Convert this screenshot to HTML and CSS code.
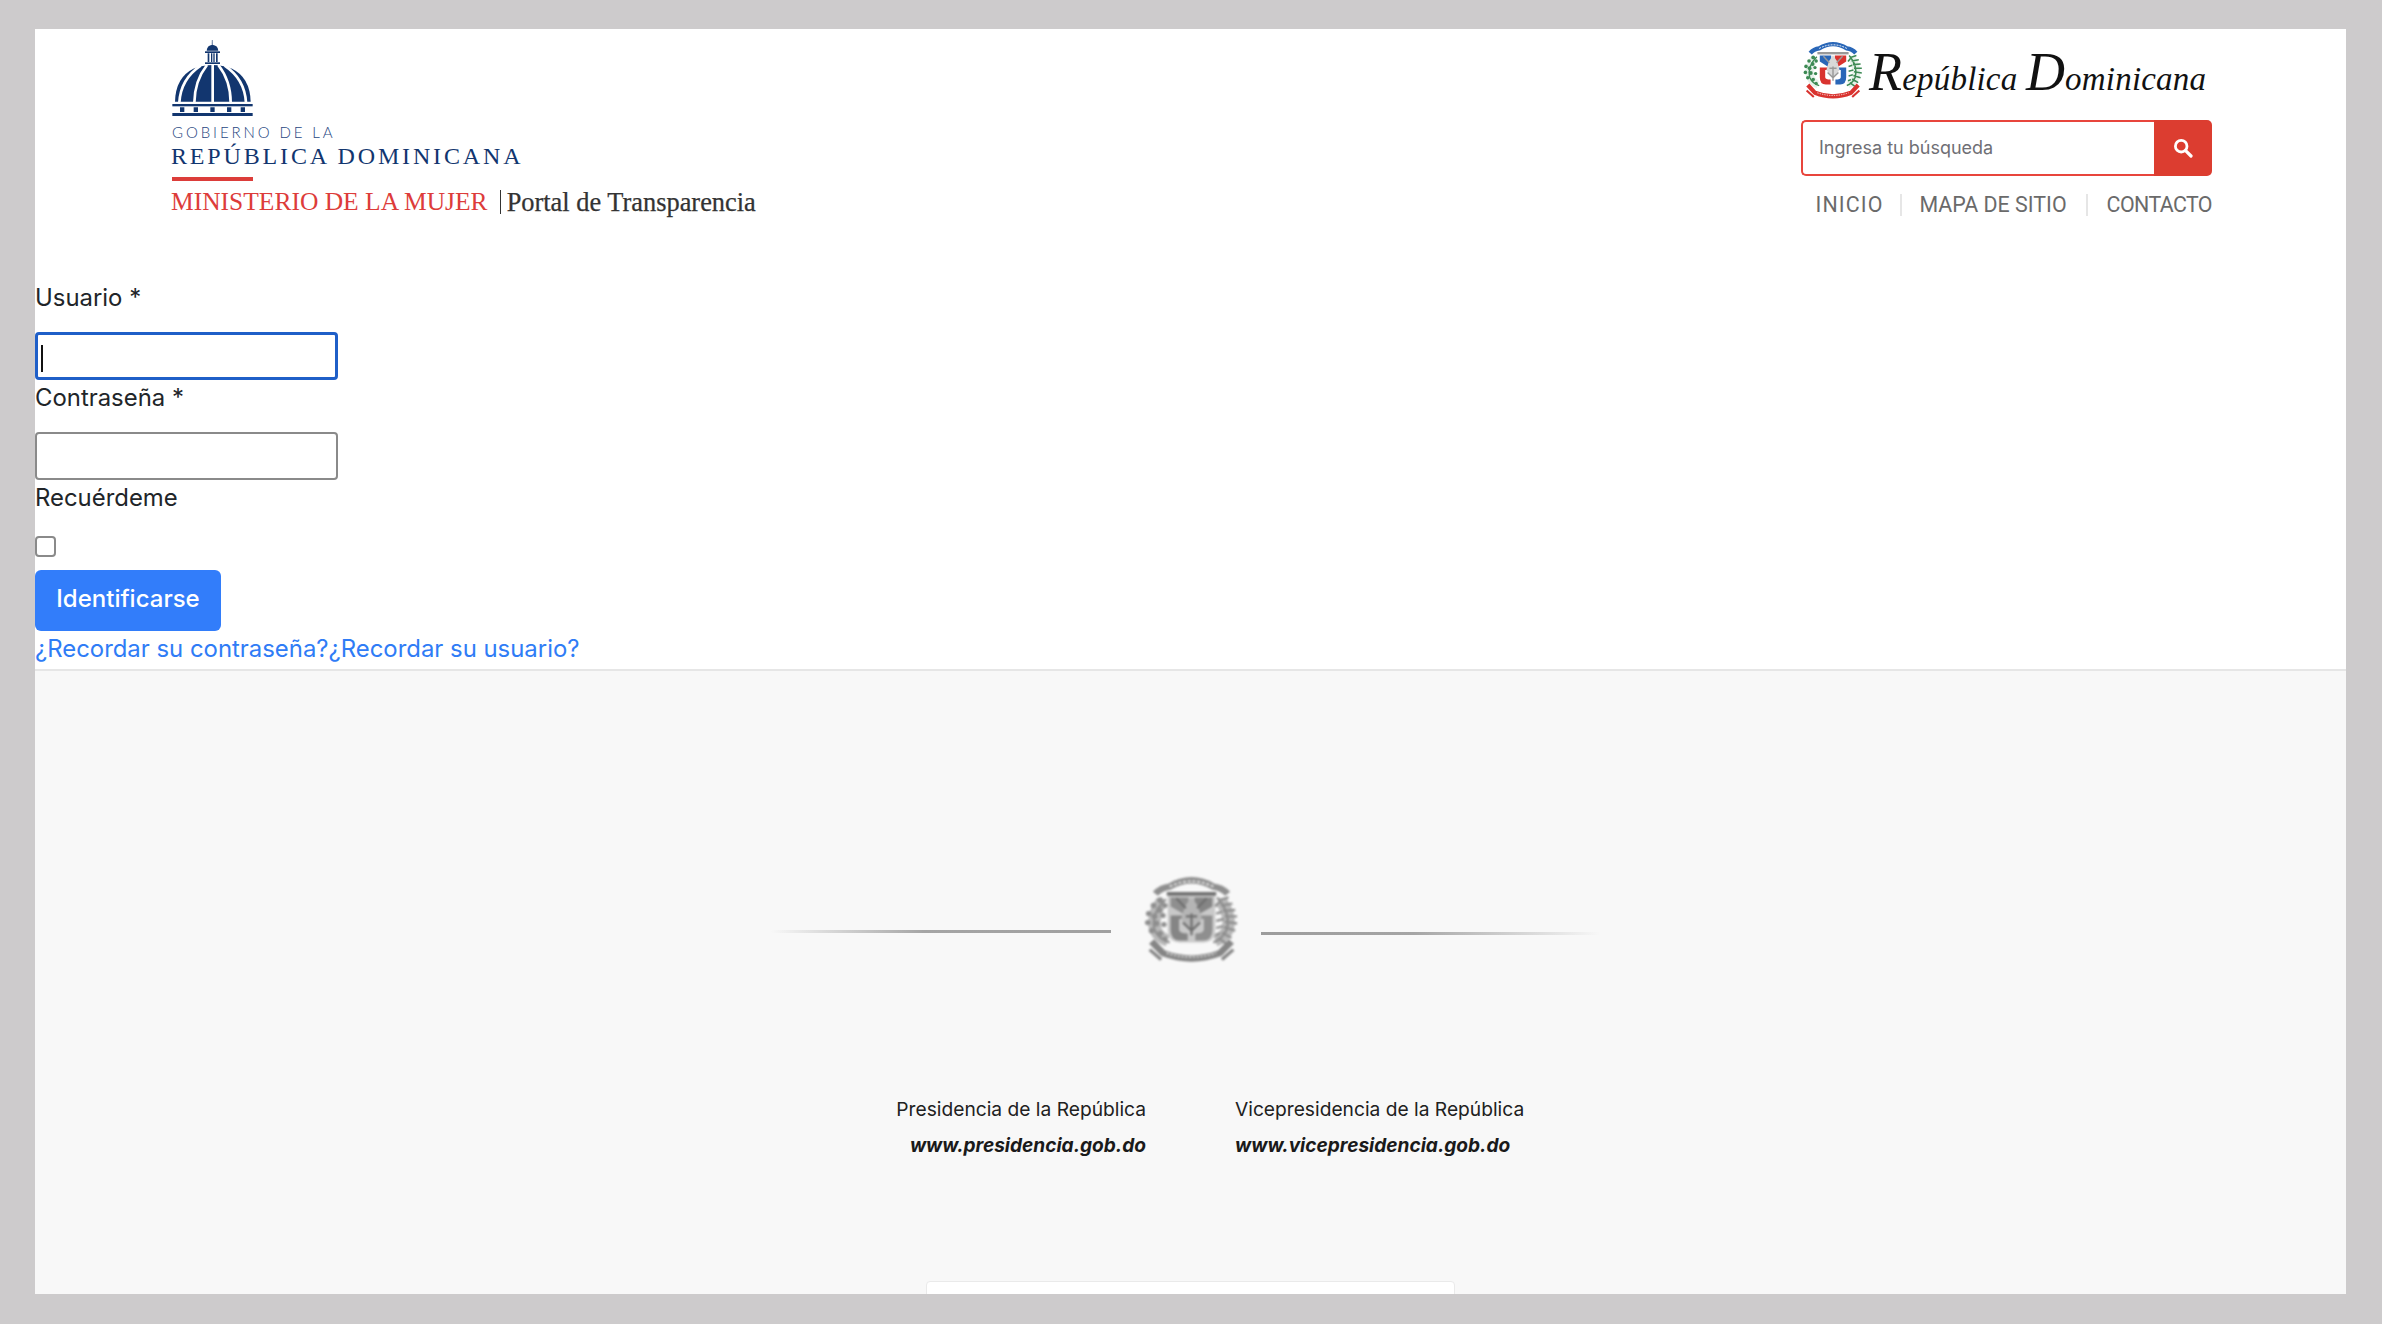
FILE: index.html
```html
<!DOCTYPE html>
<html lang="es">
<head>
<meta charset="utf-8">
<title>Portal de Transparencia</title>
<link rel="stylesheet" href="styles.css">
</head>
<body>
<svg class="defs" width="0" height="0" aria-hidden="true">
  <symbol id="coat" viewBox="0 0 100 100" preserveAspectRatio="none">
    <path class="c-blue-s" d="M12 22 Q18 15 27 14 Q50 0 73 14 Q82 15 88 22" fill="none" stroke-width="7"/>
    <path d="M27 14 Q50 2 73 14" fill="none" stroke="#fff" stroke-width="1.6" stroke-dasharray="3 2"/>
    <path class="c-wash" d="M19 30Q8 46 12 62Q16 71 25 74M81 30Q92 46 88 62Q84 71 75 74" fill="none" stroke-width="13"/>
    <path class="c-shield" d="M25 22H75V62Q75 76 62 76H38Q25 76 25 62Z"/>
    <rect class="c-line" x="24" y="20" width="52" height="4"/>
    <path class="c-blue" d="M28 26H47V44H41L28 36Z"/>
    <path class="c-red" d="M53 26H72V36L59 44H53Z"/>
    <path class="c-red" d="M28 46H46V50H37V62Q37 66 46 66V74H38Q28 74 28 62Z"/>
    <path class="c-blue" d="M72 46H54V50H63V62Q63 66 54 66V74H62Q72 74 72 62Z"/>
    <path class="c-mid" d="M43 36L50 25L57 36L61 50L50 63L39 50Z"/>
    <path class="c-line-s" d="M34 27L44 38M66 27L56 38M41 54L50 63L59 54M50 44V68M44 47H56" fill="none" stroke-width="2.4"/>
    <path class="c-green-s" d="M23 28Q7 44 11 62Q16 73 27 76" fill="none" stroke-width="2.4"/>
    <g class="c-green">
      <circle cx="17" cy="29" r="3.2"/><circle cx="22" cy="35" r="2.8"/><circle cx="10" cy="35" r="3"/><circle cx="16" cy="40" r="3.2"/>
      <circle cx="5" cy="44" r="3"/><circle cx="11" cy="47" r="3.2"/><circle cx="20" cy="46" r="2.8"/><circle cx="4" cy="54" r="3"/>
      <circle cx="13" cy="55" r="3.2"/><circle cx="21" cy="56" r="2.8"/><circle cx="8" cy="63" r="3"/><circle cx="17" cy="66" r="3"/><circle cx="22" cy="72" r="2.6"/>
    </g>
    <path class="c-green-s" d="M77 26Q92 44 87 62Q82 73 73 76M79 29L89 26M81 35L93 33M83 41L96 40M85 47L98 47M85 53L98 55M84 59L96 63M82 65L92 71M78 71L86 77M79 31L75 36M82 42L76 44M84 50L76 52M83 58L76 60M80 66L75 68" fill="none" stroke-width="2.6"/>
    <path class="c-red-s" d="M8 75L20 88Q50 100 80 88L92 75" fill="none" stroke-width="7"/>
    <path d="M24 88Q50 97 76 88" fill="none" stroke="#fff" stroke-width="1.4" stroke-dasharray="2 2"/>
    <path class="c-red-s" d="M6 84L18 95M94 84L82 95" fill="none" stroke-width="3.5"/>
  </symbol>
</svg>

<div class="frame">
  <header class="header">
    <a class="brand" href="#">
      <svg class="dome" viewBox="37 28 241 228" role="img" aria-label="Domo">
        <path class="navy" d="M157 28V42H156Z"/>
        <path class="navy" d="M140 60Q141 44 157 42Q174 44 175 60Z"/>
        <rect class="navy" x="135" y="62" width="45" height="5"/>
        <path class="navy" d="M143 68h5v26h-5zM153 68h4v26h-4zM160 68h4v26h-4zM168 68h5v26h-5z"/>
        <rect class="navy" x="135" y="95" width="45" height="5"/>
        <path class="navy" d="M45 213Q47 140 100 114Q128 103 158 103Q188 103 216 114Q270 140 272 213Z"/>
        <path class="gap" d="M158 100V216M141 103Q104 150 103 216M175 103Q212 150 212 216M122 105Q62 145 58 216M194 105Q254 145 258 216"/>
        <rect class="navy" x="37" y="220" width="241" height="7"/>
        <path class="navy" d="M60 230h13v14h-13zM101 230h13v14h-13zM151 230h13v14h-13zM201 230h13v14h-13zM242 230h13v14h-13z"/>
        <rect class="navy" x="37" y="247" width="241" height="9"/>
      </svg>
      <span class="gov">GOBIERNO DE LA</span>
      <span class="rep">REPÚBLICA DOMINICANA</span>
      <span class="rule"></span>
      <span class="ministry"><span class="ministry-name">MINISTERIO DE LA MUJER</span><span class="portal">Portal de Transparencia</span></span>
    </a>
    <div class="tools">
      <div class="rd">
        <svg class="coat-small" role="img" aria-label="Escudo"><use href="#coat"/></svg>
        <span class="script"><span class="swash">R</span>epública <span class="swash">D</span>ominicana</span>
      </div>
      <form class="search">
        <input class="search-input" type="text" placeholder="Ingresa tu búsqueda">
        <button class="search-btn" type="button" aria-label="Buscar">
          <svg width="20" height="20" viewBox="0 0 20 20"><circle cx="8.2" cy="8.2" r="5.8" fill="none" stroke="#fff" stroke-width="2.8"/><path d="M12.6 12.6L18 18" stroke="#fff" stroke-width="3.2" stroke-linecap="round"/></svg>
        </button>
      </form>
      <nav class="topnav">
        <a href="#">INICIO</a>
        <a href="#">MAPA DE SITIO</a>
        <a href="#">CONTACTO</a>
      </nav>
    </div>
  </header>

  <form class="login">
    <label class="field-label" for="u">Usuario *</label>
    <div class="caret-wrap"><input class="field field-focus" id="u" type="text"><span class="caret"></span></div>
    <label class="field-label" for="p">Contraseña *</label>
    <input class="field" id="p" type="password">
    <label class="field-label" for="r">Recuérdeme</label>
    <input class="check" id="r" type="checkbox">
    <button class="submit" type="button">Identificarse</button>
    <div class="links"><a href="#">¿Recordar su contraseña?</a><a href="#">¿Recordar su usuario?</a></div>
  </form>

  <footer class="footer">
    <div class="divider">
      <span class="line line-left"></span>
      <svg class="coat-gray" role="img" aria-label="Escudo"><use href="#coat"/></svg>
      <span class="line line-right"></span>
    </div>
    <div class="sites">
      <div class="site site-right">
        <p class="site-name">Presidencia de la República</p>
        <a class="site-url" href="#">www.presidencia.gob.do</a>
      </div>
      <div class="site">
        <p class="site-name">Vicepresidencia de la República</p>
        <a class="site-url" href="#">www.vicepresidencia.gob.do</a>
      </div>
    </div>
    <div class="card"></div>
  </footer>
</div>
</body>
</html>
```
FILE: styles.css
```css
* { box-sizing: border-box; }
html, body { margin: 0; height: 100%; }
body {
  background: #cdcbcc;
  padding: 29px 36px 30px 35px;
  font-family: "Inter", "Liberation Sans", sans-serif;
  color: #212529;
  overflow: hidden;
}
a { text-decoration: none; }
.defs { position: absolute; }

.frame {
  height: 1265px;
  background: #fff;
  overflow: hidden;
  display: flex;
  flex-direction: column;
}

/* header */
.header {
  height: 251px;
  flex: none;
  display: flex;
  justify-content: space-between;
  padding: 11px 134px 0 136px;
}
.brand { display: flex; flex-direction: column; align-items: flex-start; }
.dome { width: 81px; height: 76px; display: block; margin-left: 1px; }
.navy { fill: #12366f; }
.dome path.navy:first-child { stroke: #12366f; stroke-width: 1; }
.gap { fill: none; stroke: #fff; stroke-width: 8; }
.gov {
  margin: 8px 0 0 1px;
  font: 300 15px/16px "Lato", "Open Sans", sans-serif;
  letter-spacing: 2.9px;
  color: #27477f;
}
.rep {
  margin-top: 4px;
  font: 400 24px/24px "Liberation Serif", serif;
  letter-spacing: 2.85px;
  color: #12366f;
}
.rule { width: 81px; height: 4px; background: #dc3d3a; margin: 9px 0 0 1px; }
.ministry { margin-top: 7px; display: flex; align-items: center; font: 400 25.5px/28px "Liberation Serif", serif; }
.ministry-name { color: #dd3c3a; }
.portal {
  margin-left: 12px;
  padding-left: 6px;
  font-size: 26.4px;
  color: #333;
  border-left: 1px solid #333;
  line-height: 24px;
  -webkit-text-stroke: 0.25px #333;
}

.tools { width: 411px; display: flex; flex-direction: column; }
.rd { display: flex; align-items: center; height: 60px; margin-left: 2px; }
.coat-small { width: 60px; height: 60px; flex: none; filter: blur(0.35px); --blue: #2a67b8; --red: #d9332f; --green: #3d8a54; --mid: #d8d8d8; --line: #999; --shield: #fff; --wash: 0.12; }
.script {
  margin: 16px 0 0 6px;
  font: italic 400 33px/50px "Liberation Serif", serif;
  color: #111;
  letter-spacing: 0.2px;
  white-space: nowrap;
}
.swash { font-size: 54px; line-height: 40px; font-weight: 400; }

.c-blue { fill: var(--blue); }
.c-red { fill: var(--red); }
.c-green { fill: var(--green); }
.c-mid { fill: var(--mid); }
.c-line { fill: var(--line); }
.c-shield { fill: var(--shield); }
.c-wash { stroke: var(--green); opacity: var(--wash); }
.c-blue-s { stroke: var(--blue); }
.c-red-s { stroke: var(--red); }
.c-green-s { stroke: var(--green); }
.c-line-s { stroke: var(--line); }

.search { display: flex; height: 56px; margin-top: 20px; }
.search-input {
  flex: 1;
  min-width: 0;
  height: 100%;
  border: 2px solid #e8453c;
  border-right: 0;
  border-radius: 5px 0 0 5px;
  padding: 0 16px 2px;
  font: 400 18px "Inter", "Liberation Sans", sans-serif;
  background: #fff;
  outline: 0;
}
.search-input::placeholder { color: #6f6f75; opacity: 1; }
.search-btn {
  width: 58px;
  border: 0;
  padding: 0;
  background: #dc3d30;
  border-radius: 0 5px 5px 0;
  display: flex;
  align-items: center;
  justify-content: center;
}
.topnav { display: flex; justify-content: flex-end; margin-top: 18px; }
.topnav a {
  font: 400 21.4px/22px "Roboto", "Liberation Sans", sans-serif;
  color: #6a6a6a;
  padding: 0 19px 0 17px;
  border-right: 2px solid #e6e6e6;
  white-space: nowrap;
}
.topnav a:first-child { padding-right: 17px; letter-spacing: 1.1px; }
.topnav a:last-child { padding: 0 0 0 19px; border-right: 0; letter-spacing: -0.6px; }

/* login */
.login { flex: none; height: 389px; display: flex; flex-direction: column; align-items: flex-start; }
.field-label { font-size: 23.9px; line-height: 36px; height: 36px; }
.field {
  width: 303px;
  height: 48px;
  margin-top: 16px;
  border: 2px solid #8a8a8a;
  border-radius: 4px;
  background: #fff;
  outline: 0;
  display: block;
}
.field-focus { border: 3px solid #1f5fc8; }
.caret-wrap { position: relative; }
.caret { position: absolute; left: 6px; top: 29px; width: 2px; height: 27px; background: #111; }
.check {
  appearance: none;
  width: 21px;
  height: 21px;
  margin: 20px 0 0;
  border: 2px solid #8a8a8a;
  border-radius: 4px;
  background: #fff;
}
.submit {
  width: 186px;
  height: 61px;
  margin-top: 13px;
  border: 0;
  border-radius: 6px;
  background: #327dfa;
  color: #fff;
  font: 500 24px "Inter", "Liberation Sans", sans-serif;
  padding: 0 0 5px;
}
.links { font-size: 23.9px; line-height: 36px; }
.links a { color: #2f7cf6; }

/* footer */
.footer {
  flex: 1;
  background: #f8f8f8;
  border-top: 2px solid #e6e6e6;
  display: flex;
  flex-direction: column;
  align-items: center;
  padding-top: 203px;
}
.divider { width: 829px; height: 89px; margin-right: 10px; display: flex; align-items: flex-start; }
.line { height: 3px; flex: none; }
.line-left { width: 340px; margin: 56px 33px 0 0; background: linear-gradient(to right, rgba(150,150,150,0), #a5a5a5 45%, #a0a0a0); }
.line-right { width: 339px; margin: 58px 0 0 22px; background: linear-gradient(to right, #9c9c9c, #a5a5a5 45%, rgba(150,150,150,0)); }
.coat-gray { width: 95px; height: 90px; flex: none; filter: blur(0.8px); --blue: #8f8f8f; --red: #858585; --green: #8e8e8e; --mid: #b5b5b5; --line: #6f6f6f; --shield: #c9c9c9; --wash: 0.6; }

.sites { display: flex; gap: 89px; margin-top: 131px; }
.site { width: 300px; }
.site-right { text-align: right; }
.site-name { margin: 0; font-size: 19.2px; line-height: 30px; color: #212121; white-space: nowrap; }
.site-url { display: block; margin-top: 6px; font-size: 19.1px; line-height: 30px; font-weight: 700; font-style: italic; color: #1a1a1a; white-space: nowrap; }
.card {
  width: 529px;
  height: 40px;
  margin-top: 121px;
  background: #fff;
  border: 1px solid #eaeaea;
  border-radius: 4px;
  flex: none;
}
```
